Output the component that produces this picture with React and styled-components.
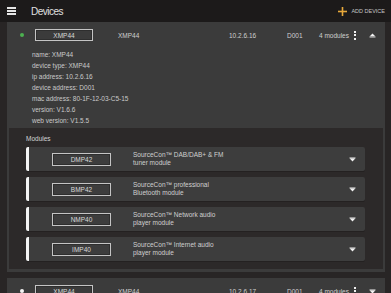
import React from "react";
import styled, { createGlobalStyle } from "styled-components";

const Global = createGlobalStyle`
  html, body { margin: 0; padding: 0; background: #282525; }
  body { font-family: "Liberation Sans", Arial, sans-serif; color: #ddd; overflow: hidden; }
`;

const Page = styled.div`
  width: 391px;
  height: 293px;
  overflow: hidden;
  background: #282525;
`;

const TopBar = styled.header`
  height: 22px;
  background: #1c1a1a;
  display: flex;
  align-items: center;
  padding: 0 6px 0 7px;
`;

const Burger = styled.div`
  width: 9px;
  display: flex;
  flex-direction: column;
  gap: 1.5px;
  span { display: block; height: 1.5px; background: #e6e6e6; }
`;

const Title = styled.div`
  margin-left: 15px;
  font-size: 10px;
  letter-spacing: -0.5px;
  color: #e0e0e0;
  flex: 1;
`;

const AddButton = styled.div`
  display: flex;
  align-items: center;
  gap: 4px;
  font-size: 5.5px;
  color: #c4c4c4;
`;

const List = styled.div`
  padding: 0 6px 0 7px;
  display: flex;
  flex-direction: column;
  gap: 6px;
`;

const Card = styled.div`
  background: #3b3b3b;
  padding: 0 2px 3px;
  display: flex;
  flex-direction: column;
`;

const HeadRow = styled.div`
  height: 26px;
  display: grid;
  grid-template-columns: 26px 83px 111px 58px 32px 30px 12px 22px;
  align-items: center;
  font-size: 6.5px;
  color: #cfcfcf;
`;

const Dot = styled.span`
  justify-self: center;
  width: 4px;
  height: 4px;
  border-radius: 50%;
  background: ${p => p.$color};
`;

const NameBox = styled.div`
  width: 58px;
  height: 12px;
  box-sizing: border-box;
  border: 1px solid #c4c4c4;
  box-shadow: inset 0 0 0 1px #2e2e2e;
  display: flex;
  align-items: center;
  justify-content: center;
  font-size: 6.5px;
  color: #d8d8d8;
`;

const Kebab = styled.div`
  justify-self: center;
  display: flex;
  flex-direction: column;
  gap: 1.5px;
  span { width: 2px; height: 2px; background: #f0f0f0; }
`;

const CaretBox = styled.div`
  justify-self: center;
  display: flex;
`;

const Details = styled.div`
  padding: 1px 0 2px 23px;
  font-size: 6.5px;
  line-height: 11px;
  color: #cacaca;
`;

const Modules = styled.div`
  background: #2c2929;
  padding: 7px 18px 8px 17px;
  display: flex;
  flex-direction: column;
`;

const ModulesLabel = styled.div`
  font-size: 6.5px;
  line-height: 8px;
  color: #d4d4d4;
  margin-bottom: 4px;
`;

const ModuleList = styled.div`
  display: flex;
  flex-direction: column;
  gap: 6px;
`;

const ModuleRow = styled.div`
  height: 24px;
  box-sizing: border-box;
  background: #3d3d3d;
  border-left: 3px solid #f4f4f4;
  border-radius: 2px;
  display: flex;
  align-items: center;
  padding: 0 9px 0 23px;
  box-shadow: 0 1px 0 #242121;
`;

const ModuleBox = styled(NameBox)`
  width: 59px;
  height: 13px;
`;

const Desc = styled.div`
  margin-left: 22px;
  flex: 1;
  font-size: 6.5px;
  line-height: 8px;
  color: #d0d0d0;
`;

const Caret = ({ up }) => (
  <svg width="7" height="5" viewBox="0 0 7 5">
    {up ? (
      <>
        <path d="M0.5 3.5 L3.5 0.5 L6.5 3.5 Z" fill="#f2f2f2" />
        <rect x="0.5" y="3.6" width="6" height="1" fill="#bdbdbd" />
      </>
    ) : (
      <>
        <rect x="0.5" y="0.3" width="6" height="1" fill="#bdbdbd" />
        <path d="M0.5 1.3 L6.5 1.3 L3.5 4.5 Z" fill="#f2f2f2" />
      </>
    )}
  </svg>
);

const Plus = () => (
  <svg width="9" height="9" viewBox="0 0 9 9">
    <rect x="3.7" y="0" width="1.6" height="9" fill="#e7a83b" />
    <rect x="0" y="3.7" width="9" height="1.6" fill="#e7a83b" />
  </svg>
);

const modules = [
  { id: "DMP42", l1: "SourceCon™ DAB/DAB+ & FM", l2: "tuner module" },
  { id: "BMP42", l1: "SourceCon™ professional", l2: "Bluetooth module" },
  { id: "NMP40", l1: "SourceCon™ Network audio", l2: "player module" },
  { id: "IMP40", l1: "SourceCon™ Internet audio", l2: "player module" },
];

const details = [
  "name: XMP44",
  "device type: XMP44",
  "ip address: 10.2.6.16",
  "device address: D001",
  "mac address: 80-1F-12-03-C5-15",
  "version: V1.6.6",
  "web version: V1.5.5",
];

const DeviceHead = ({ dot, ip, open }) => (
  <HeadRow>
    <Dot $color={dot} />
    <NameBox>XMP44</NameBox>
    <span>XMP44</span>
    <span>{ip}</span>
    <span>D001</span>
    <span>4 modules</span>
    <Kebab><span /><span /><span /></Kebab>
    <CaretBox><Caret up={open} /></CaretBox>
  </HeadRow>
);

export default function App() {
  return (
    <Page>
      <Global />
      <TopBar>
        <Burger><span /><span /><span /></Burger>
        <Title>Devices</Title>
        <AddButton><Plus />ADD DEVICE</AddButton>
      </TopBar>
      <List>
        <Card>
          <DeviceHead dot="#4cb050" ip="10.2.6.16" open />
          <Details>
            {details.map(d => <div key={d}>{d}</div>)}
          </Details>
          <Modules>
            <ModulesLabel>Modules</ModulesLabel>
            <ModuleList>
              {modules.map(m => (
                <ModuleRow key={m.id}>
                  <ModuleBox>{m.id}</ModuleBox>
                  <Desc>{m.l1}<br />{m.l2}</Desc>
                  <Caret />
                </ModuleRow>
              ))}
            </ModuleList>
          </Modules>
        </Card>
        <Card>
          <DeviceHead dot="#f4f4f4" ip="10.2.6.17" />
        </Card>
      </List>
    </Page>
  );
}
